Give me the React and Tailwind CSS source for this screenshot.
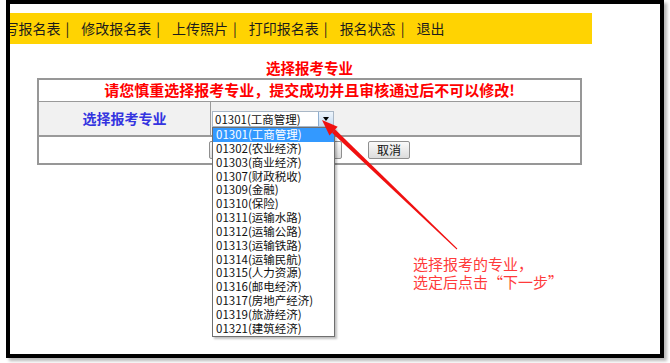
import { useState } from 'react'

const navItems = ['填写报名表', '修改报名表', '上传照片', '打印报名表', '报名状态', '退出']

const majors = [
  '01301(工商管理)',
  '01302(农业经济)',
  '01303(商业经济)',
  '01307(财政税收)',
  '01309(金融)',
  '01310(保险)',
  '01311(运输水路)',
  '01312(运输公路)',
  '01313(运输铁路)',
  '01314(运输民航)',
  '01315(人力资源)',
  '01316(邮电经济)',
  '01317(房地产经济)',
  '01319(旅游经济)',
  '01321(建筑经济)',
]

const cjk = { fontFamily: '"Noto Sans CJK SC", "Liberation Sans", sans-serif' }

export default function App() {
  const [selected, setSelected] = useState(0)
  const [open, setOpen] = useState(true)

  return (
    <div className="relative w-[670px] h-[363px] bg-white overflow-hidden" style={cjk}>
      <div className="ml-[6px] w-[658px] h-[358px] border-4 border-black bg-white shadow-[3px_3px_3px_#b8b8b8] flex flex-col">
        {/* top menu */}
        <nav className="mt-[9px] w-[582px] h-[31px] bg-[#ffd302] overflow-hidden flex items-center text-[14px] text-[#1c1c1c]">
          <div className="ml-[-19.5px] flex items-center whitespace-nowrap">
            {navItems.map((t, i) => (
              <span key={t} className="flex items-center">
                {t}
                {i < navItems.length - 1 && <span className="ml-[5px] mr-[12px]">|</span>}
              </span>
            ))}
          </div>
        </nav>

        <h1 className="mt-[14px] ml-[27px] w-[545px] text-center text-[14.5px] leading-[20px] font-bold text-[#ff0000]">选择报考专业</h1>

        <div className="ml-[27px] w-[545px] border-2 border-[#979797]">
          <div className="h-[22px] border-b border-[#9a9a9a] flex items-center justify-center text-[15px] font-bold text-[#ff0000]">
            请您慎重选择报考专业，提交成功并且审核通过后不可以修改!
          </div>

          <div className="h-[35px] border-b-2 border-[#9a9a9a] bg-[#f1f1f1] flex">
            <div className="w-[172px] border-r border-[#9a9a9a] flex items-center justify-center text-[14px] font-bold text-[#3434e0]">
              选择报考专业
            </div>
            <div className="flex items-center pl-[1px]">
              <div className="relative">
                <div
                  className="w-[122px] h-[16px] bg-white border border-[#a9b7c6] flex items-center cursor-default"
                  onClick={() => setOpen(!open)}
                >
                  <span className="flex-1 pl-[2px] text-[11.5px] leading-[14px] text-[#111]">{majors[selected]}</span>
                  <span className="w-[15px] h-[14px] border-l border-[#8eaed0] bg-gradient-to-b from-[#eef5fc] to-[#c6dbf1] flex items-center justify-center">
                    <span className="w-0 h-0 border-l-[3.5px] border-r-[3.5px] border-t-[4px] border-l-transparent border-r-transparent border-t-black" />
                  </span>
                </div>
                {open && (
                  <ul className="absolute left-0 top-[16px] z-10 w-[123px] bg-white border border-[#6f6f6f] shadow-[2px_2px_2px_rgba(0,0,0,0.25)] py-[0.5px]">
                    {majors.map((m, i) => (
                      <li
                        key={m}
                        className={`h-[13.85px] pl-[3px] text-[11.5px] leading-[13.85px] whitespace-nowrap ${i === selected ? 'bg-[#3399ff] text-white' : 'text-[#111]'}`}
                        onClick={() => { setSelected(i); setOpen(false) }}
                      >
                        {m}
                      </li>
                    ))}
                  </ul>
                )}
              </div>
            </div>
          </div>

          <div className="h-[26px] flex items-center justify-center gap-[26px]">
            <button className="w-[133px] h-[18px] rounded-[2px] border border-[#8f8f8f] bg-gradient-to-b from-[#fafafa] to-[#dcdcdc] text-[12px] leading-[16px] text-[#111]">下一步</button>
            <button className="w-[42px] h-[18px] rounded-[2px] border border-[#8f8f8f] bg-gradient-to-b from-[#fafafa] to-[#dcdcdc] text-[12px] leading-[16px] text-[#111]">取消</button>
          </div>
        </div>

        <div className="ml-[403px] mt-[90px] text-[15px] leading-[18px] text-[#ff3b3b] whitespace-nowrap">
          <p>选择报考的专业，</p>
          <p>选定后点击“下一步”</p>
        </div>
      </div>

      {/* annotation arrow */}
      <svg className="absolute left-0 top-0 pointer-events-none z-20" width="670" height="363" viewBox="0 0 670 363">
        <polygon points="322,120 337.7,126.8 329.5,135.4" fill="#f01010" />
        <polygon points="335.2,129.5 332.0,132.7 456.7,249.4 457.3,248.6" fill="#f01010" />
      </svg>
    </div>
  )
}
